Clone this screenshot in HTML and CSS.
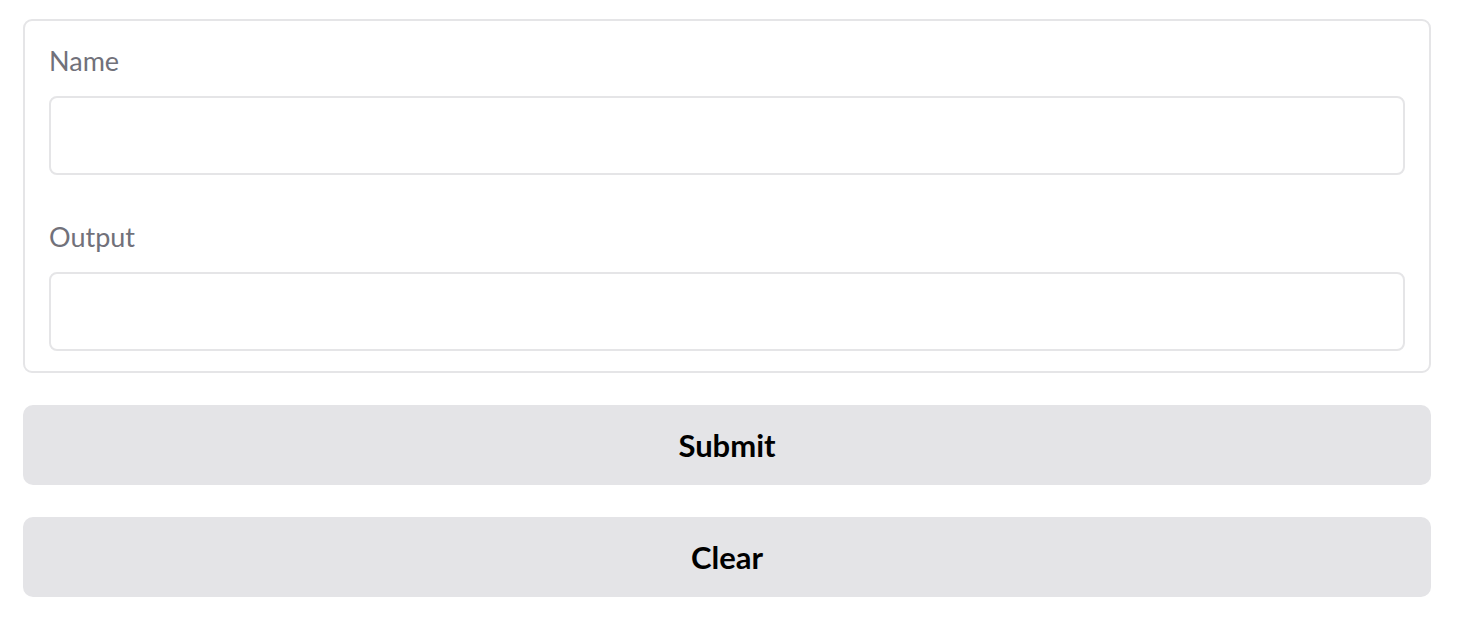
FILE: index.html
```html
<!DOCTYPE html>
<html>
<head>
<meta charset="utf-8">
<link rel="stylesheet" href="styles.css">
</head>
<body>
<div class="app">
  <div class="panel">
    <label class="field">
      <span class="label">Name</span>
      <input class="textbox" type="text">
    </label>
    <label class="field">
      <span class="label">Output</span>
      <input class="textbox" type="text">
    </label>
  </div>
  <button class="btn">Submit</button>
  <button class="btn">Clear</button>
</div>
</body>
</html>
```

FILE: styles.css
```css
html, body {
  margin: 0;
  padding: 0;
  background: #ffffff;
}
body {
  font-family: "Source Sans Pro", "Lato", "Noto Sans", sans-serif;
}
.app {
  display: flex;
  flex-direction: column;
  gap: 32px;
  padding: 19px 31px 0 23px;
}
.panel {
  border: 2px solid #e5e5e7;
  border-radius: 9px;
  padding: 20px 24px 20px 24px;
  display: flex;
  flex-direction: column;
  gap: 42px;
}
.field {
  display: flex;
  flex-direction: column;
  gap: 15px;
}
.label {
  font-size: 27px;
  line-height: 40px;
  color: #71717a;
}
.textbox {
  box-sizing: border-box;
  height: 79px;
  border: 2px solid #e5e5e7;
  border-radius: 8px;
  background: #fff;
  outline: none;
  margin: 0;
  font: inherit;
}
.btn {
  height: 80px;
  border: none;
  border-radius: 10px;
  background: #e4e4e7;
  font-family: inherit;
  font-weight: 700;
  font-size: 31px;
  color: #000;
  margin: 0;
  padding: 0;
}
```
